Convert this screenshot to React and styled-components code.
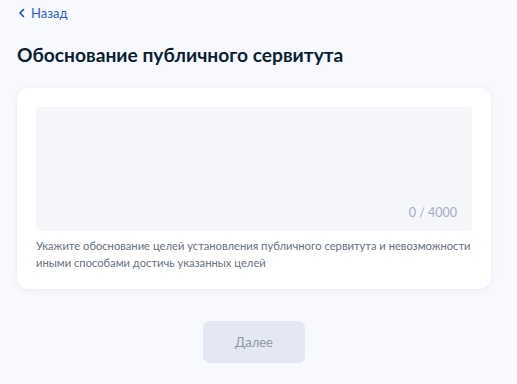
import styled, { createGlobalStyle } from 'styled-components';

const GlobalStyle = createGlobalStyle`
  html, body {
    margin: 0;
    padding: 0;
    background: #f8f9fd;
    font-family: Lato, "Noto Sans", sans-serif;
  }
`;

const App = () => {
  return (
    <>
      <GlobalStyle />
      <Page>
        <BackLink href="#">
          <svg width="8" height="10" viewBox="0 0 8 10" fill="none">
            <path d="M5.5 1.5L2 5l3.5 3.5" stroke="#0d4cd3" strokeWidth="1.6" strokeLinecap="round" strokeLinejoin="round" />
          </svg>
          Назад
        </BackLink>
        <Title>Обоснование публичного сервитута</Title>
        <Card>
          <Field>
            <Counter>0 / 4000</Counter>
          </Field>
          <Hint>
            Укажите обоснование целей установления публичного сервитута и невозможности
            иными способами достичь указанных целей
          </Hint>
        </Card>
        <Actions>
          <Button disabled>Далее</Button>
        </Actions>
      </Page>
    </>
  );
};

export default App;

const Page = styled.div`
  width: 474px;
  padding: 5px 17px 0;
`;

const BackLink = styled.a`
  display: flex;
  width: fit-content;
  align-items: center;
  gap: 5px;
  color: #2a5bd7;
  font-size: 13px;
  text-decoration: none;
  line-height: 16px;
  margin-left: 1px;
`;

const Title = styled.h1`
  margin: 22px 0 0;
  font-size: 19.2px;
  font-weight: 700;
  color: #0b1f33;
  line-height: 24px;
`;

const Card = styled.div`
  margin-top: 21px;
  background: #fff;
  border-radius: 12px;
  box-shadow: 0 1px 6px rgba(120, 140, 190, 0.12);
  padding: 19px 19px 18px;
`;

const Field = styled.div`
  height: 124px;
  background: #f5f6fa;
  border-radius: 4px;
  display: flex;
  align-items: flex-end;
  justify-content: flex-end;
  padding: 0 15px 11px 0;
  box-sizing: border-box;
`;

const Counter = styled.span`
  font-size: 12.5px;
  color: #a3acc5;
`;

const Hint = styled.p`
  margin: 6px 0 0;
  font-size: 11.2px;
  line-height: 17px;
  color: #66727f;
`;

const Actions = styled.div`
  display: flex;
  justify-content: center;
  margin-top: 32px;
`;

const Button = styled.button`
  width: 102px;
  height: 42px;
  border: none;
  border-radius: 7px;
  background: #e4e8f2;
  color: #8d96aa;
  font-family: Lato, sans-serif;
  font-size: 13px;
`;
